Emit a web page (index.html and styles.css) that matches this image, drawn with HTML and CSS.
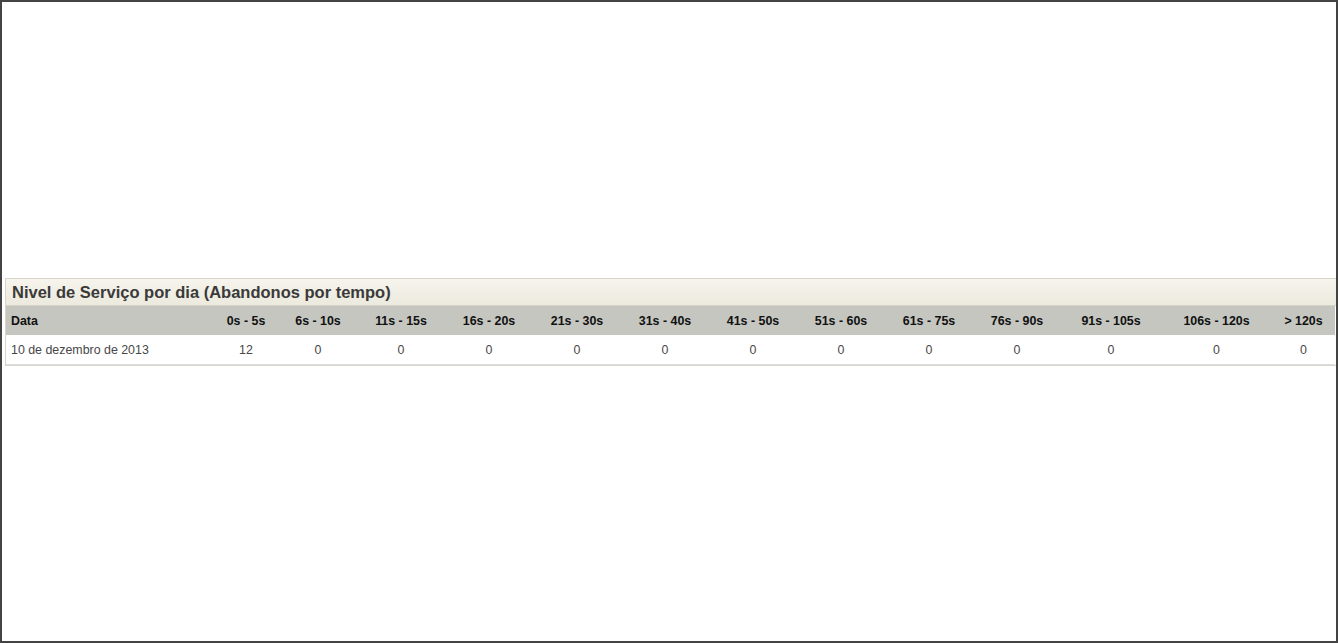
FILE: index.html
```html
<!DOCTYPE html>
<html lang="pt">
<head>
<meta charset="utf-8">
<title>Nivel de Serviço por dia</title>
<link rel="stylesheet" href="styles.css">
</head>
<body>
<div class="frame">
  <div class="chart-area"></div>
  <div class="panel">
    <div class="panel-title">Nivel de Serviço por dia (Abandonos por tempo)</div>
    <table class="grid">
      <thead>
        <tr>
          <th class="c-data">Data</th>
          <th class="c-w66">0s - 5s</th>
          <th class="c-w78">6s - 10s</th>
          <th class="c-w88">11s - 15s</th>
          <th class="c-w88">16s - 20s</th>
          <th class="c-w88">21s - 30s</th>
          <th class="c-w88">31s - 40s</th>
          <th class="c-w88">41s - 50s</th>
          <th class="c-w88">51s - 60s</th>
          <th class="c-w88">61s - 75s</th>
          <th class="c-w88">76s - 90s</th>
          <th class="c-w100">91s - 105s</th>
          <th class="c-w111">106s - 120s</th>
          <th class="c-w63">&gt; 120s</th>
        </tr>
      </thead>
      <tbody>
        <tr>
          <td class="c-data">10 de dezembro de 2013</td>
          <td>12</td>
          <td>0</td>
          <td>0</td>
          <td>0</td>
          <td>0</td>
          <td>0</td>
          <td>0</td>
          <td>0</td>
          <td>0</td>
          <td>0</td>
          <td>0</td>
          <td>0</td>
          <td>0</td>
        </tr>
      </tbody>
    </table>
  </div>
</div>
</body>
</html>
```
FILE: styles.css
```css
html, body {
  margin: 0;
  padding: 0;
  background: #ffffff;
}

.frame {
  box-sizing: border-box;
  width: 1338px;
  height: 643px;
  border: 2px solid #434343;
  overflow: hidden;
  font-family: "Liberation Sans", Arial, sans-serif;
}

.chart-area {
  height: 276px;
}

.panel {
  margin-left: 3px;
  border: 1px solid #d8d5ca;
  border-right: none;
  overflow: hidden;
}

.panel-title {
  height: 26px;
  line-height: 27px;
  padding-left: 6px;
  font-size: 16.5px;
  font-weight: bold;
  color: #3a3a3a;
  background: linear-gradient(to bottom, #f6f4ec, #ece9de);
  border-bottom: 1px solid #d6d3c6;
}

.grid {
  border-collapse: collapse;
  table-layout: fixed;
  width: 1329px;
  font-size: 12.4px;
}

.grid th {
  height: 29px;
  padding: 0;
  background: #c4c6bf;
  color: #111111;
  font-weight: bold;
  text-align: center;
}

.grid td {
  height: 28px;
  padding: 1px 0 0 0;
  color: #474747;
  text-align: center;
  border-bottom: 1px solid #dedede;
}

.grid .c-data {
  width: 207px;
  text-align: left;
  padding-left: 5px;
  box-sizing: border-box;
}

.grid .c-w66 { width: 66px; }
.grid .c-w78 { width: 78px; }
.grid .c-w88 { width: 88px; }
.grid .c-w100 { width: 100px; }
.grid .c-w111 { width: 111px; }
.grid .c-w63 { width: 63px; }
```
